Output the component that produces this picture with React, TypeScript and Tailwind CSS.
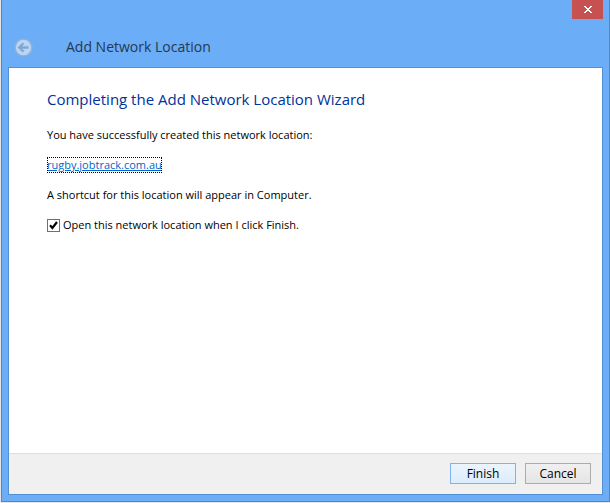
import { useState } from 'react';

const buttonBase = 'h-[21px] w-[66px] border text-center text-xs leading-4 text-black';

const BackIcon = () => (
  <svg width="19" height="19" viewBox="0 0 19 19" fill="none" aria-hidden="true">
    <circle cx="9.5" cy="9.5" r="8.5" fill="#b5d5fb" stroke="#94afd0" strokeWidth="1.6" />
    <path d="M14.5 9.5H5.5M9.5 5.2L5.2 9.5L9.5 13.8" stroke="#8ba5c6" strokeWidth="2.3" />
  </svg>
);

const CloseIcon = () => (
  <svg width="8" height="7" viewBox="0 0 8 7" fill="#ffffff" shapeRendering="crispEdges" aria-hidden="true">
    <path d="M0 0h2v1H0zM6 0h2v1H6zM1 1h2v1H1zM5 1h2v1H5zM2 2h4v1H2zM3 3h2v1H3zM2 4h4v1H2zM1 5h2v1H1zM5 5h2v1H5zM0 6h2v1H0zM6 6h2v1H6z" />
  </svg>
);

const TitleBar = () => (
  <header className="relative flex h-[67px] shrink-0 items-end pb-2.5">
    <button type="button" aria-label="Back" disabled className="ml-1.5">
      <BackIcon />
    </button>
    <h1 className="ml-[33px] text-sm leading-5 text-[#26384f]">Add Network Location</h1>
    <button
      type="button"
      aria-label="Close"
      className="absolute top-0 right-0 flex h-[19px] w-[31px] items-center justify-center bg-[#c75050]"
    >
      <CloseIcon />
    </button>
  </header>
);

export default function App() {
  const [openLocation, setOpenLocation] = useState(true);

  return (
    <div className="flex min-h-screen flex-col bg-[#e6e6e6] pb-px pl-px font-['Open_Sans','Noto_Sans',sans-serif]">
      <div className="flex grow flex-col border border-t-0 border-[#4f87c7] bg-[#6badf6] px-1.5 pb-1.5">
        <TitleBar />
        <div className="flex grow flex-col border border-[#5590d3] bg-white">
          <main className="grow px-[38px] pt-[19px] text-[11px] leading-4 text-black">
            <h2 className="text-[15px] leading-6 text-[#003399]">Completing the Add Network Location Wizard</h2>
            <p className="mt-4">You have successfully created this network location:</p>
            <p className="mt-3.5">
              <a
                href="#"
                className="inline-block leading-4 text-[#0066cc] underline outline outline-dotted -outline-offset-1 outline-black"
              >
                rugby.jobtrack.com.au
              </a>
            </p>
            <p className="mt-3.5">A shortcut for this location will appear in Computer.</p>
            <label className="mt-3.5 flex items-center gap-[3px]">
              <span className="relative flex">
                <input
                  type="checkbox"
                  checked={openLocation}
                  onChange={(e) => setOpenLocation(e.target.checked)}
                  className="size-[13px] appearance-none border border-[#707070] bg-white"
                />
                {openLocation && (
                  <svg className="pointer-events-none absolute inset-0" width="13" height="13" viewBox="0 0 13 13" fill="none">
                    <path d="M3 6.2L5.4 9L10 3" stroke="#000000" strokeWidth="2.2" />
                  </svg>
                )}
              </span>
              Open this network location when I click Finish.
            </label>
          </main>
          <footer className="flex h-[41px] shrink-0 items-start justify-end gap-[9px] border-t border-[#dfdfdf] bg-[#f0f0f0] pt-[9px] pr-[11px]">
            <button type="button" className={`${buttonBase} border-[#7eb4ea] bg-linear-to-b from-[#ecf4fc] to-[#dcecfc]`}>
              Finish
            </button>
            <button type="button" className={`${buttonBase} border-[#acacac] bg-linear-to-b from-[#f0f0f0] to-[#e5e5e5]`}>
              Cancel
            </button>
          </footer>
        </div>
      </div>
    </div>
  );
}
